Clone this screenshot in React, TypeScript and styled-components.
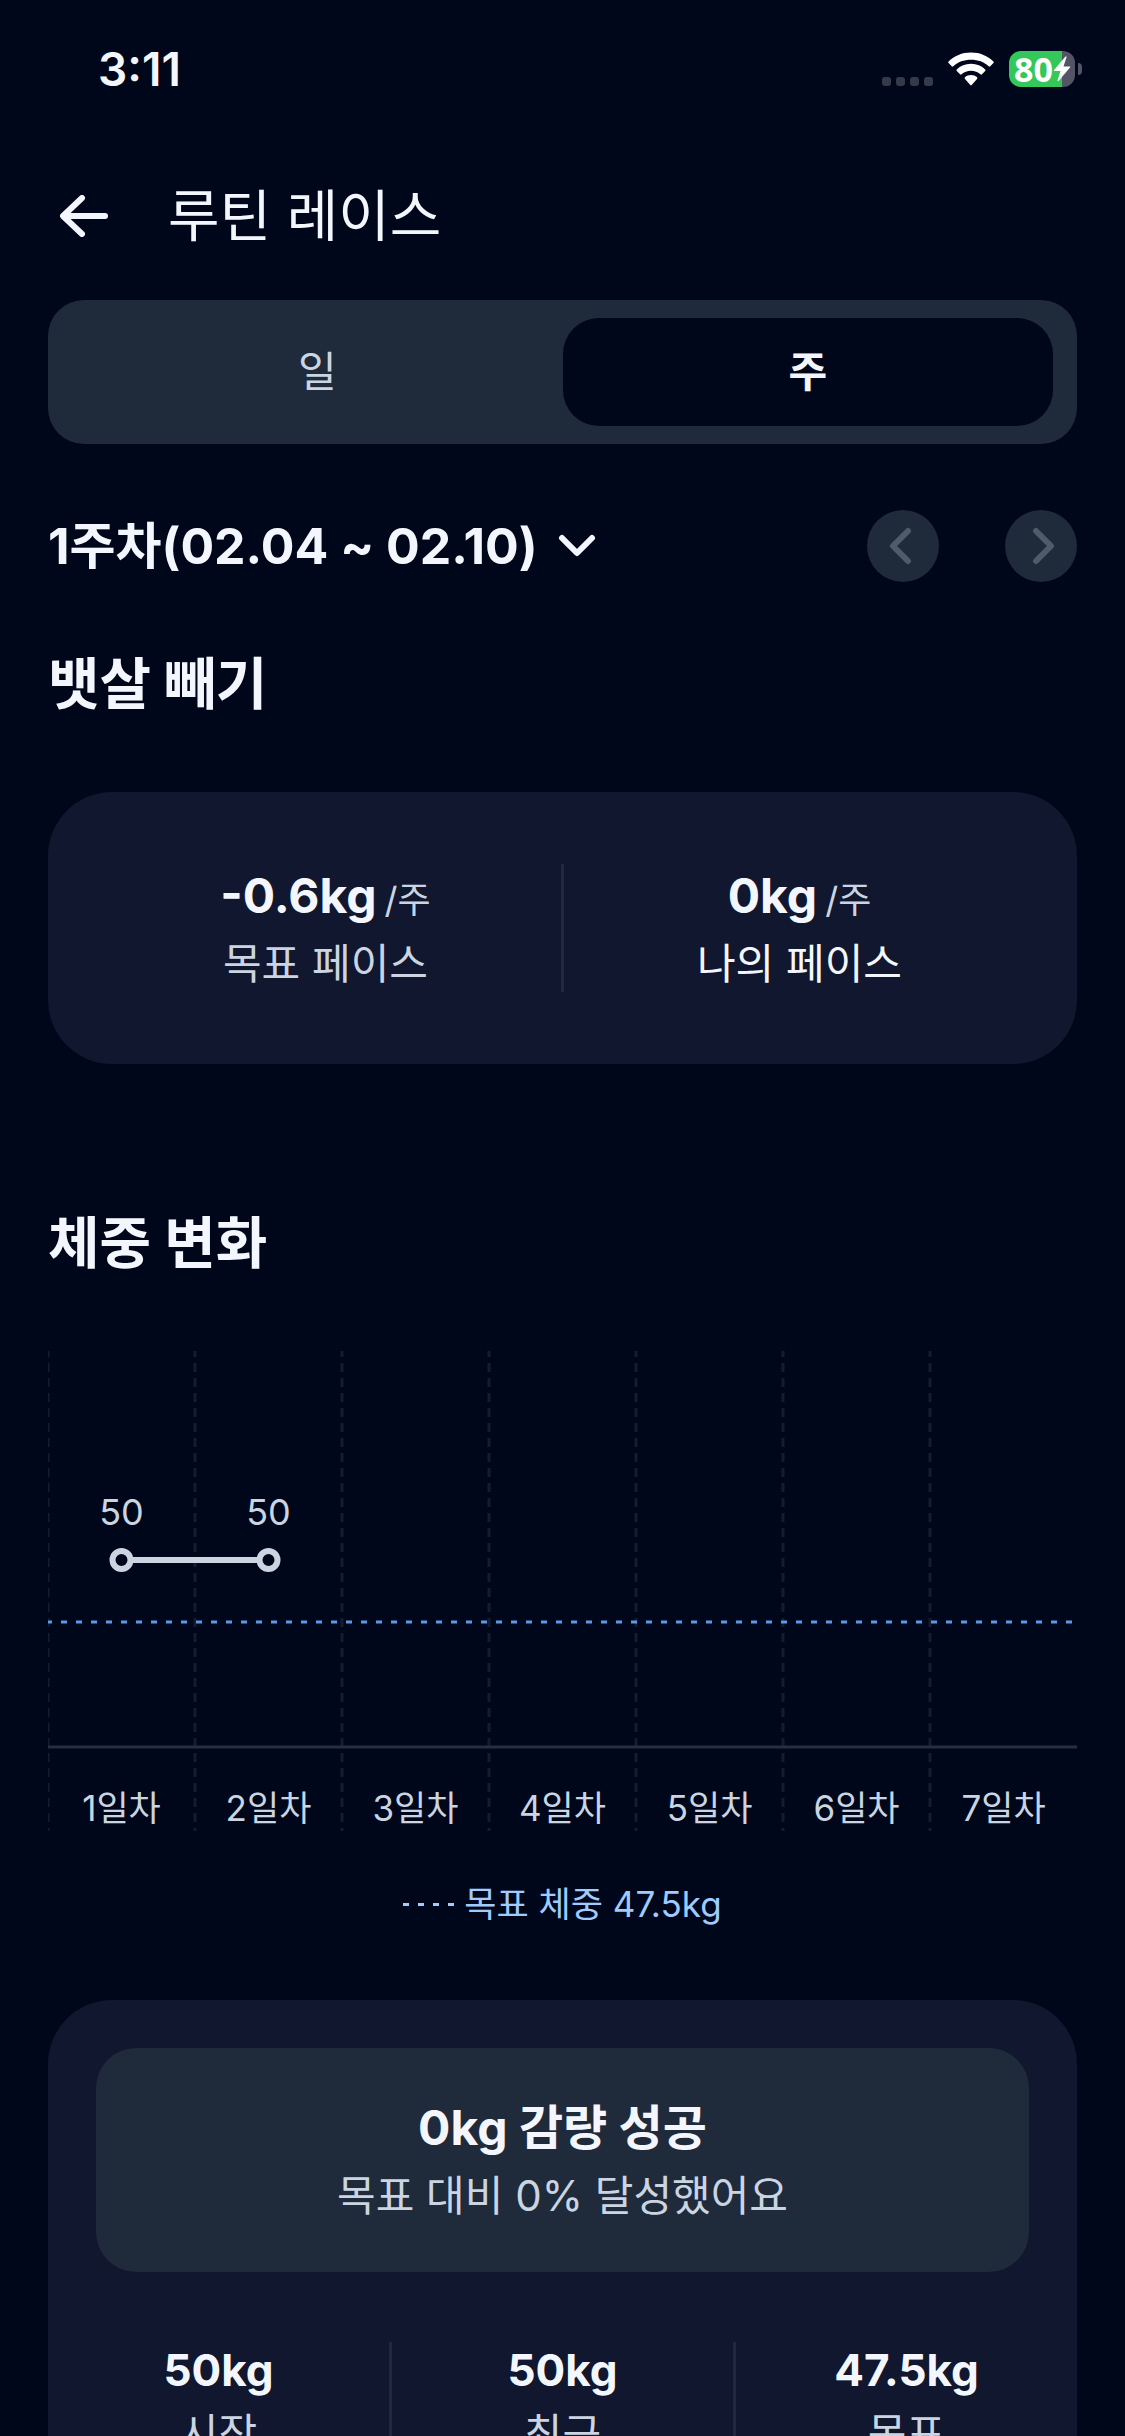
import React, { useState } from "react";
import styled, { createGlobalStyle } from "styled-components";

const color = {
  background: "#00071a",
  card: "#10172e",
  raised: "#1f2a3b",
  divider: "#22293c",
  strong: "#f3f7fd",
  muted: "#cbd5e1",
  disabled: "#4f5a6b",
  target: "#5b9ae8",
  legend: "#a0cbff",
};

const fontStack = `Inter, "Noto Sans CJK KR", sans-serif`;

const GlobalStyle = createGlobalStyle`
  * { box-sizing: border-box; }
  body {
    margin: 0;
    background: ${color.background};
    color: ${color.strong};
    font-family: ${fontStack};
  }
  h1, h2, p { margin: 0; }
  button, select { font: inherit; color: inherit; border: 0; background: none; padding: 0; margin: 0; }
`;

const Screen = styled.div`
  display: flex;
  flex-direction: column;
  height: 100vh;
  overflow: hidden;
`;

const StatusBar = styled.div`
  display: flex;
  flex: none;
  align-items: center;
  justify-content: space-between;
  height: 138px;
  padding: 0 43px 0 98px;
`;

const Clock = styled.time`
  font-size: 46px;
  line-height: 56px;
  font-weight: 600;
`;

const StatusIcons = styled.div`
  display: flex;
  align-items: center;
`;

const Signal = styled.svg`
  margin: 24px 15px 0 0;
`;

const Battery = styled.div`
  display: flex;
  align-items: center;
  gap: 3px;
  margin-left: 15px;
`;

const BatteryBody = styled.div`
  display: flex;
  align-items: center;
  width: 66px;
  height: 36px;
  padding-left: 5px;
  border-radius: 12px;
  background: linear-gradient(to right, #34c759 53px, #535566 53px);
  color: #fff;
  font: 700 34px/36px "Open Sans", "Noto Sans", sans-serif;
`;

const BatteryTip = styled.span`
  width: 4px;
  height: 12px;
  border-radius: 0 6px 6px 0;
  background: #535566;
`;

const Header = styled.header`
  display: flex;
  flex: none;
  align-items: center;
  gap: 48px;
  height: 156px;
  padding: 0 48px;
`;

const BackButton = styled.button`
  display: grid;
  place-items: center;
  width: 72px;
  height: 72px;
  cursor: pointer;
`;

const Title = styled.h1`
  font-size: 56px;
  line-height: 72px;
  font-weight: 400;
`;

const Content = styled.main`
  flex: 1;
  min-height: 0;
  overflow-y: auto;
  scrollbar-width: none;
  padding: 6px 48px 48px;
`;

const Tabs = styled.div`
  display: flex;
  height: 144px;
  padding: 18px 24px;
  border-radius: 36px;
  background: ${color.raised};
`;

const Tab = styled.button<{ $active: boolean }>`
  flex: 1;
  border-radius: 36px;
  background: ${(p) => (p.$active ? color.background : "transparent")};
  color: ${(p) => (p.$active ? color.strong : color.muted)};
  font-size: 42px;
  line-height: 56px;
  font-weight: ${(p) => (p.$active ? 700 : 400)};
  cursor: pointer;
`;

const WeekRow = styled.div`
  display: flex;
  align-items: center;
  justify-content: space-between;
  margin: 66px 0;
`;

const WeekPicker = styled.label`
  display: flex;
  align-items: center;
  gap: 20px;
`;

const WeekSelect = styled.select`
  appearance: none;
  font-size: 50px;
  line-height: 64px;
  font-weight: 700;
  cursor: pointer;
`;

const Pager = styled.div`
  display: flex;
  gap: 66px;
`;

const PagerButton = styled.button`
  display: grid;
  place-items: center;
  width: 72px;
  height: 72px;
  border-radius: 50%;
  background: ${color.raised};
  color: ${color.disabled};
`;

const SectionTitle = styled.h2`
  font-size: 56px;
  line-height: 72px;
  font-weight: 700;
`;

const Card = styled.section`
  border-radius: 64px;
  background: ${color.card};
`;

const PaceCard = styled(Card)`
  display: flex;
  gap: 6px;
  margin: 72px 0 143px;
  padding: 72px 48px;
`;

const Divider = styled.span`
  flex: none;
  width: 3px;
  background: ${color.divider};
`;

const Stack = styled.div`
  display: flex;
  flex: 1;
  flex-direction: column;
  align-items: center;
  gap: 8px;
`;

const Value = styled.p<{ $small?: boolean }>`
  font-size: ${(p) => (p.$small ? 44 : 48)}px;
  line-height: ${(p) => (p.$small ? 56 : 64)}px;
  font-weight: 700;
`;

const Unit = styled.span`
  margin-left: 8px;
  color: ${color.muted};
  font-size: 36px;
  line-height: 36px;
  font-weight: 400;
`;

const Label = styled.p<{ $bright?: boolean }>`
  color: ${(p) => (p.$bright ? color.strong : color.muted)};
  font-size: 42px;
  line-height: 56px;
`;

const Chart = styled.svg`
  display: block;
  width: 100%;
  height: auto;
  margin-top: 72px;
  font-family: ${fontStack};
`;

const PointLabel = styled.text`
  fill: ${color.muted};
  font-size: 36px;
  text-anchor: middle;
`;

const DayLabel = styled(PointLabel)`
  font-size: 35px;
`;

const Legend = styled.p`
  display: flex;
  align-items: center;
  justify-content: center;
  gap: 10px;
  margin: 45px 0 68px;
  color: ${color.legend};
  font-size: 35px;
  line-height: 56px;
`;

const ResultCard = styled(Card)`
  padding: 48px 0 72px;
`;

const ResultBanner = styled(Stack)`
  margin: 0 48px 70px;
  padding: 48px;
  border-radius: 40px;
  background: ${color.raised};
`;

const Stats = styled.div`
  display: flex;
`;

const Stat = styled(Stack)`
  & + & {
    border-left: 3px solid ${color.divider};
  }
`;

const WifiIcon = () => (
  <svg width="46" height="34" viewBox="0 0 46 34" fill="#fff" aria-label="Wi-Fi">
    <path d="M23 0.5C32 0.5 39.8 3.9 45.4 9.4Q46.2 10.3 45.4 11.1L42.3 14.3Q41.5 15 40.7 14.2C36.1 9.8 30 7.7 23 7.7S9.9 9.8 5.3 14.2Q4.5 15 3.7 14.3L0.6 11.1Q-0.2 10.3 0.6 9.4C6.2 3.9 14 0.5 23 0.5Z" />
    <path d="M23 11.8C28.700 11.8 33.700 13.900 37.200 17.400Q38 18.300 37.200 19.100L34 22.300Q33.200 23 32.400 22.300C29.900 20 26.700 18.800 23 18.800S16.100 20 13.600 22.300Q12.800 23 12 22.300L8.800 19.100Q8 18.300 8.800 17.400C12.300 13.900 17.300 11.8 23 11.8Z" />
    <path d="M23 23C25.400 23 27.400 23.800 28.900 25.100Q29.900 26 29 26.900L23.900 32.700Q23 33.700 22.100 32.700L17 26.900Q16.100 26 17.100 25.100C18.600 23.800 20.600 23 23 23Z" />
  </svg>
);

const BackIcon = () => (
  <svg width="48" height="42" viewBox="0 0 48 42" fill="none" stroke="currentColor" strokeWidth="6" strokeLinecap="round" strokeLinejoin="round">
    <path d="M45 21H4M22 3L3 21L22 39" />
  </svg>
);

const ChevronDown = () => (
  <svg width="38" height="24" viewBox="0 0 38 24" fill="none" stroke="currentColor" strokeWidth="6" strokeLinecap="round" strokeLinejoin="round">
    <path d="M4 4L19 19L34 4" />
  </svg>
);

const Chevron = ({ direction }: { direction: "left" | "right" }) => (
  <svg width="30" height="38" viewBox="0 0 30 38" fill="none" stroke="currentColor" strokeWidth="6" strokeLinecap="round" strokeLinejoin="round">
    <path d={direction === "left" ? "M20 4L5 19L20 34" : "M10 4L25 19L10 34"} />
  </svg>
);

const DAY_WIDTH = 147;
const days = [1, 2, 3, 4, 5, 6, 7];
const weights = [50, 50];
const POINT_Y = 209;
const centerOf = (index: number) => DAY_WIDTH * index + DAY_WIDTH / 2;

const WeightChart = () => (
  <Chart viewBox="0 0 1029 480" role="img" aria-label="체중 변화">
    <g stroke="#151c2d" strokeWidth="3" strokeDasharray="9 6" strokeDashoffset="3">
      {days.map((day, i) => (
        <line key={day} x1={DAY_WIDTH * i} x2={DAY_WIDTH * i} y1="0" y2="480" />
      ))}
    </g>
    <line x1="0" x2="1029" y1="396" y2="396" stroke="#282e41" strokeWidth="3" />
    <line x1="0" x2="1029" y1="271" y2="271" stroke={color.target} strokeWidth="3" strokeDasharray="6 9" strokeDashoffset="2" />
    <polyline
      points={weights.map((_, i) => `${centerOf(i)},${POINT_Y}`).join(" ")}
      fill="none"
      stroke={color.muted}
      strokeWidth="6"
    />
    {weights.map((weight, i) => (
      <g key={i}>
        <circle cx={centerOf(i)} cy={POINT_Y} r="9" fill={color.background} stroke={color.muted} strokeWidth="6" />
        <PointLabel x={centerOf(i)} y="174">
          {weight}
        </PointLabel>
      </g>
    ))}
    {days.map((day, i) => (
      <DayLabel key={day} x={centerOf(i)} y="470">
        {day}일차
      </DayLabel>
    ))}
  </Chart>
);

const stats = [
  { value: "50kg", label: "시작" },
  { value: "50kg", label: "최근" },
  { value: "47.5kg", label: "목표" },
];

export default function App() {
  const [tab, setTab] = useState("주");

  return (
    <Screen>
      <GlobalStyle />
      <StatusBar>
        <Clock>3:11</Clock>
        <StatusIcons>
          <Signal width="51" height="9" viewBox="0 0 51 9" fill="#353a4a">
            {[0, 14, 28, 42].map((x) => (
              <rect key={x} x={x} width="9" height="9" rx="3" />
            ))}
          </Signal>
          <WifiIcon />
          <Battery>
            <BatteryBody>
              80
              <svg width="18" height="26" viewBox="0 0 18 26" fill="#fff">
                <path d="M12.5 0.5L0.8 14.2Q0.3 15 1.2 15H7.5L4.5 24.5Q4.5 25.8 5.6 25L17.2 11.3Q17.7 10.5 16.8 10.5H10.5L13.5 1.2Q13.500 0 12.500 0.500Z" />
              </svg>
            </BatteryBody>
            <BatteryTip />
          </Battery>
        </StatusIcons>
      </StatusBar>

      <Header>
        <BackButton aria-label="뒤로">
          <BackIcon />
        </BackButton>
        <Title>루틴 레이스</Title>
      </Header>

      <Content>
        <Tabs role="tablist">
          {["일", "주"].map((name) => (
            <Tab key={name} role="tab" aria-selected={tab === name} $active={tab === name} onClick={() => setTab(name)}>
              {name}
            </Tab>
          ))}
        </Tabs>

        <WeekRow>
          <WeekPicker>
            <WeekSelect aria-label="주차">
              <option>1주차(02.04 ~ 02.10)</option>
            </WeekSelect>
            <ChevronDown />
          </WeekPicker>
          <Pager>
            <PagerButton disabled aria-label="이전 주">
              <Chevron direction="left" />
            </PagerButton>
            <PagerButton disabled aria-label="다음 주">
              <Chevron direction="right" />
            </PagerButton>
          </Pager>
        </WeekRow>

        <SectionTitle>뱃살 빼기</SectionTitle>
        <PaceCard>
          <Stack>
            <Value>
              -0.6kg<Unit>/주</Unit>
            </Value>
            <Label>목표 페이스</Label>
          </Stack>
          <Divider />
          <Stack>
            <Value>
              0kg<Unit>/주</Unit>
            </Value>
            <Label $bright>나의 페이스</Label>
          </Stack>
        </PaceCard>

        <SectionTitle>체중 변화</SectionTitle>
        <WeightChart />
        <Legend>
          <svg width="51" height="3" viewBox="0 0 51 3">
            <line x1="0" x2="51" y1="1.5" y2="1.5" stroke="currentColor" strokeWidth="3" strokeDasharray="6 9" />
          </svg>
          목표 체중 47.5kg
        </Legend>

        <ResultCard>
          <ResultBanner>
            <Value>0kg 감량 성공</Value>
            <Label>목표 대비 0% 달성했어요</Label>
          </ResultBanner>
          <Stats>
            {stats.map((stat) => (
              <Stat key={stat.label}>
                <Value $small>{stat.value}</Value>
                <Label>{stat.label}</Label>
              </Stat>
            ))}
          </Stats>
        </ResultCard>
      </Content>
    </Screen>
  );
}
